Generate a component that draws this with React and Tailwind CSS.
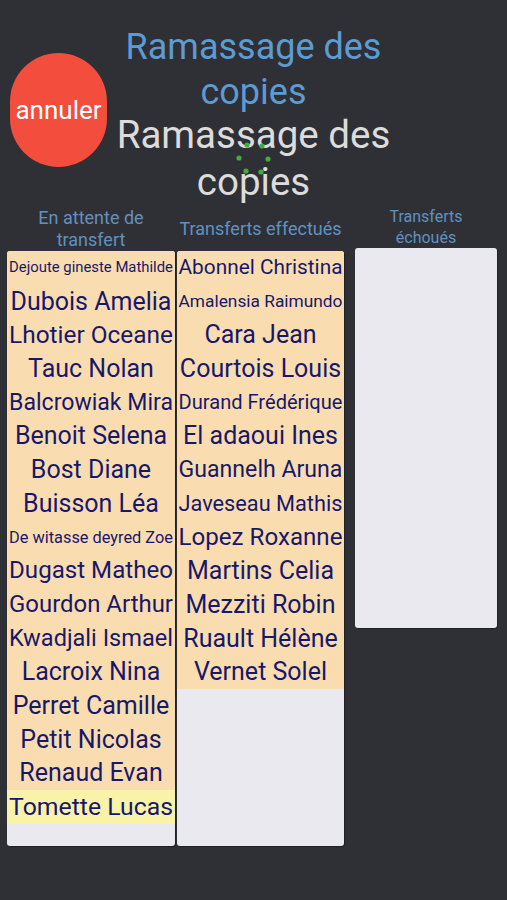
import React from "react";
import clsx from "clsx";

// students still waiting and those already transferred
const pending = [
  "Dejoute gineste Mathilde",
  "Dubois Amelia",
  "Lhotier Oceane",
  "Tauc Nolan",
  "Balcrowiak Mira",
  "Benoit Selena",
  "Bost Diane",
  "Buisson Léa",
  "De witasse deyred Zoe",
  "Dugast Matheo",
  "Gourdon Arthur",
  "Kwadjali Ismael",
  "Lacroix Nina",
  "Perret Camille",
  "Petit Nicolas",
  "Renaud Evan",
  "Tomette Lucas",
];

const done = [
  "Abonnel Christina",
  "Amalensia Raimundo",
  "Cara Jean",
  "Courtois Louis",
  "Durand Frédérique",
  "El adaoui Ines",
  "Guannelh Aruna",
  "Javeseau Mathis",
  "Lopez Roxanne",
  "Martins Celia",
  "Mezziti Robin",
  "Ruault Hélène",
  "Vernet Solel",
];

const MAX_SIZE = 25;
let ctx = null;

// shrink the font so the name fits the column width
const fitSize = (name, width = 164) => {
  if (!ctx) ctx = document.createElement("canvas").getContext("2d");
  ctx.font = `${MAX_SIZE}px Roboto`;
  const w = ctx.measureText(name).width;
  return Math.min(MAX_SIZE, (MAX_SIZE * width) / w);
};

const NameRow = ({ name, highlight }) => (
  <div
    className={clsx(
      "h-[33.7px] leading-[33.7px] overflow-hidden whitespace-nowrap text-center text-[#18186a]",
      highlight ? "bg-[#f8f3a8]" : "bg-[#f9ddb0]"
    )}
    style={{ fontSize: fitSize(name) }}
  >
    {name}
  </div>
);

const Spinner = () => (
  <svg width="40" height="40" viewBox="0 0 40 40" className="absolute left-[234px] top-[138px]">
    <circle cx="13" cy="7" r="2.6" fill="#3fae3f" />
    <circle cx="28" cy="8" r="2.6" fill="#3fae3f" />
    <circle cx="5" cy="20" r="2.6" fill="#3fae3f" />
    <circle cx="34" cy="21" r="2.6" fill="#3fae3f" />
    <circle cx="12" cy="33" r="2.6" fill="#3fae3f" />
    <circle cx="27" cy="34" r="2.6" fill="#3fae3f" />
  </svg>
);

export default function App() {
  return (
    <div className="min-h-[900px] bg-[#2f3035] font-['Roboto',sans-serif]">
      <div className="relative grid grid-cols-[107px_1fr_107px] pt-[25px]">
        <div className="flex items-start pl-[10px] pt-[28px]">
          <button className="w-[97px] h-[114px] rounded-full bg-[#f24d3d] text-white text-[26px]">
            annuler
          </button>
        </div>
        <div className="flex flex-col items-center text-center whitespace-nowrap">
          <h1 className="text-[36px] leading-[45px] text-[#5d9bd2]">
            Ramassage des
            <br />
            copies
          </h1>
          <h2 className="-mt-[3px] text-[38.5px] leading-[46.5px] text-[#dcdcdc]">
            Ramassage des
            <br />
            copies
          </h2>
        </div>
        <div />
        <Spinner />
      </div>

      <div className="mt-[1px] flex items-start pl-[7px] pr-[10px]">
        <div className="w-[168px] flex flex-col">
          <div className="h-[45px] flex items-center justify-center text-center text-[18px] leading-[22px] text-[#5f92c0]">
            En attente de
            <br />
            transfert
          </div>
          <div className="h-[595px] rounded-[3px] bg-[#e9e9ef] overflow-hidden shadow-[1px_1px_1px_rgba(0,0,0,0.35)]">
            {pending.map((n, i) => (
              <NameRow key={n} name={n} highlight={i === pending.length - 1} />
            ))}
          </div>
        </div>
        <div className="ml-[2px] w-[167px] flex flex-col">
          <div className="h-[45px] flex items-center justify-center text-center text-[18px] leading-[22px] text-[#5f92c0]">
            Transferts effectués
          </div>
          <div className="h-[595px] rounded-[3px] bg-[#e9e9ef] overflow-hidden shadow-[1px_1px_1px_rgba(0,0,0,0.35)]">
            {done.map((n) => (
              <NameRow key={n} name={n} />
            ))}
          </div>
        </div>
        <div className="ml-[11px] w-[142px] flex flex-col">
          <div className="h-[42px] flex items-center justify-center text-center text-[16px] leading-[21px] text-[#5f92c0]">
            Transferts
            <br />
            échoués
          </div>
          <div className="h-[380px] rounded-[3px] bg-[#e9e9ef] shadow-[1px_1px_1px_rgba(0,0,0,0.35)]" />
        </div>
      </div>
    </div>
  );
}
